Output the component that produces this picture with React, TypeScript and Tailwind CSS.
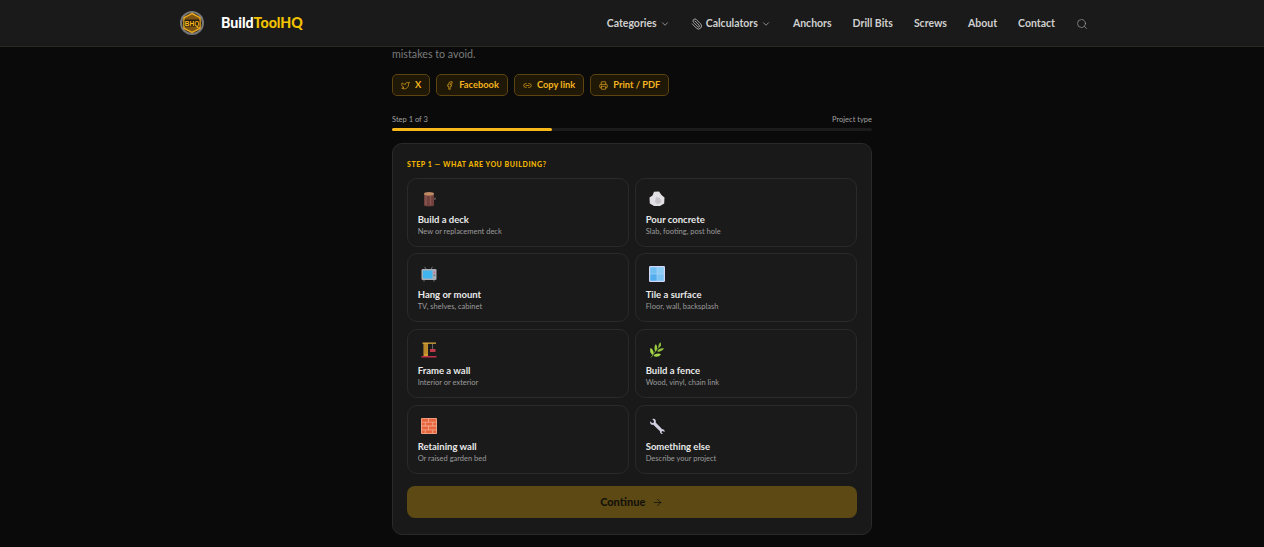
import React from "react";
import { ChevronDown, Paperclip, Search, Twitter, Facebook, Link2, Printer, ArrowRight } from "lucide-react";

const Logo = () => (
  <svg width="26" height="26" viewBox="0 0 26 26">
    <circle cx="13" cy="13" r="12" fill="#77777a" />
    <circle cx="13" cy="13" r="10" fill="#2e2410" />
    <path d="M13 3.500l8 4.200v10.600l-8 4.200-8-4.200V7.700z" fill="#7a5410" stroke="#e8a820" strokeWidth="1.500" />
    <rect x="5.500" y="9.500" width="15" height="7" fill="#2a1d08" />
    <text x="13" y="15.600" textAnchor="middle" fontSize="6.500" fontWeight="800" fill="#f5b820" fontFamily="'Liberation Sans', sans-serif">BHQ</text>
  </svg>
);

const Wood = () => (
  <svg width="16" height="16" viewBox="0 0 16 16">
    <path d="M3 3h10v11.500c-2 1.200-8 1.200-10 0z" fill="#70403c" />
    <path d="M5 5v9M9.500 5v9" stroke="#8a5650" strokeWidth="1.400" />
    <ellipse cx="8" cy="2.800" rx="5" ry="1.900" fill="#c08a64" />
    <path d="M13 7l2-.5v2l-2 .6z" fill="#5b5048" />
  </svg>
);
const Rock = () => (
  <svg width="16" height="16" viewBox="0 0 16 16">
    <path d="M5 .8l5-.3 2.500 3.500 3 2.500-.3 6-4.200 2.500H5L.8 12.500.5 6.500 3.500 4.500z" fill="#e2e0e4" />
    <path d="M7 6l4 1 1.500 4-4 2.500L6 11z" fill="#c6c3c9" />
  </svg>
);
const Tv = () => (
  <svg width="16" height="16" viewBox="0 0 16 16">
    <path d="M5 3L3.500 .8M10 3l1.500-2.200" stroke="#8a8a92" strokeWidth=".8" />
    <rect x=".5" y="3" width="15" height="11" rx="1.200" fill="#a9adb6" />
    <rect x="2" y="4.500" width="9.500" height="8" fill="#3fb4ee" />
    <rect x="12.600" y="5.500" width="1.600" height="1.600" fill="#d864a0" />
    <rect x="12.600" y="8.500" width="1.600" height="1.600" fill="#70747c" />
    <path d="M3 14v1.500M13 14v1.500" stroke="#777" strokeWidth="1" />
  </svg>
);
const Tile = () => (
  <svg width="16" height="16" viewBox="0 0 16 16">
    <rect width="16" height="16" rx="1.200" fill="#cfd8f8" />
    <rect x="1.200" y="1.200" width="6.600" height="6.600" fill="#6fbff2" />
    <rect x="8.200" y="1.200" width="6.600" height="6.600" fill="#8ccdf6" />
    <rect x="1.200" y="8.200" width="6.600" height="6.600" fill="#54aeee" />
    <rect x="8.200" y="8.200" width="6.600" height="6.600" fill="#7cc4f4" />
  </svg>
);
const Frame = () => (
  <svg width="16" height="16" viewBox="0 0 16 16">
    <rect x="2.500" y="1" width="4.500" height="13" fill="#d09a30" />
    <path d="M3 3h3.500M3 5h3.500M3 7h3.500M3 9h3.500M3 11h3.500" stroke="#8a6420" strokeWidth=".7" />
    <rect x="1.500" y=".5" width="13.500" height="1.300" fill="#d9a63a" />
    <rect x=".5" y="14" width="15" height="1.500" fill="#c2304a" />
    <rect x="9" y="7" width="5.500" height="3" fill="#c23a4a" />
    <path d="M11.500 2v5" stroke="#888" strokeWidth=".7" />
  </svg>
);
const Herb = () => (
  <svg width="16" height="16" viewBox="0 0 16 16">
    <path d="M2 15.500C5 11 8 7 12 3" stroke="#6f9a30" strokeWidth=".9" fill="none" />
    <path d="M4 13C.800 11.500 .800 8 1.500 6c2.800 1.300 3.800 4.500 2.500 7z" fill="#a6d648" />
    <path d="M6.500 9.500C4.800 7.500 5.500 3.500 6.800 2.300 8.800 4.300 8.300 8 6.500 9.500z" fill="#9ccc40" />
    <path d="M9.500 6C8.800 3.500 10 1.500 11.500 .2c1.200 2.300.5 4.600-2 5.800z" fill="#8cbc38" />
    <path d="M4.500 14c2.500 1.300 6 .8 7.500-1.800-2.500-1.200-6-.6-7.500 1.800z" fill="#a6d648" />
    <path d="M8 9.500c2.500.5 5.500-.5 7-3-3-.6-5.500.5-7 3z" fill="#94c43c" />
  </svg>
);
const Brick = () => (
  <svg width="16" height="16" viewBox="0 0 16 16">
    <rect width="16" height="16" rx="1" fill="#f4ad90" />
    <path d="M.8 .8h6.400v3H.8zM8 .8h7.200v3H8zM.8 4.600h3v3h-3zM4.600 4.600h6.800v3H4.600zM12.200 4.600h3v3h-3zM.8 8.400h6.400v3H.8zM8 8.400h7.200v3H8zM.8 12.200h3v3h-3zM4.600 12.200h6.800v3H4.600zM12.200 12.200h3v3h-3z" fill="#e8653e" />
  </svg>
);
const Wrench = () => (
  <svg width="16" height="16" viewBox="0 0 16 16">
    <path d="M1.200 3.300L3 5l1.700-.3L5 3 3.300 1.200C5 .3 6.500 1.200 6.800 3c.1.600 0 1.100-.1 1.400l6.500 6.800c1.500-.3 2.800 1.100 2.300 2.800L13.700 13l-1 .4-.2 1.100 1.500 1.300c-1.700.6-3.300-.7-3-2.500L4.300 6.800C2.500 7.200.500 5.500 1.200 3.300z" fill="#d2cfe2" />
  </svg>
);

const cards = [
  { Icon: Wood, t: "Build a deck", d: "New or replacement deck" },
  { Icon: Rock, t: "Pour concrete", d: "Slab, footing, post hole" },
  { Icon: Tv, t: "Hang or mount", d: "TV, shelves, cabinet" },
  { Icon: Tile, t: "Tile a surface", d: "Floor, wall, backsplash" },
  { Icon: Frame, t: "Frame a wall", d: "Interior or exterior" },
  { Icon: Herb, t: "Build a fence", d: "Wood, vinyl, chain link" },
  { Icon: Brick, t: "Retaining wall", d: "Or raised garden bed" },
  { Icon: Wrench, t: "Something else", d: "Describe your project" },
];

const shares = [
  { Icon: Twitter, t: "X" },
  { Icon: Facebook, t: "Facebook" },
  { Icon: Link2, t: "Copy link" },
  { Icon: Printer, t: "Print / PDF" },
];

export default function App() {
  return (
    <div className="h-[547px] overflow-hidden bg-[#0a0a0a] font-['Lato',sans-serif]">
      <header className="h-[47px] bg-[#1a1a1a] border-b border-[#2a2a1c] flex justify-center">
        <div className="w-[912px] flex items-center justify-between pl-[3px] pr-0">
          <div className="flex items-center gap-[16px]">
            <Logo />
            <span className="text-[14.200px] font-black text-white">
              Build<span className="text-[#f2c200]">ToolHQ</span>
            </span>
          </div>
          <nav className="flex items-center pt-[1px] text-[10.500px] font-bold text-[#cfcfcf]">
            <span className="flex items-center gap-[3px] mr-[21px]">
              Categories <ChevronDown size={10} strokeWidth={1.500} />
            </span>
            <span className="flex items-center gap-[3px] mr-[22px]">
              <Paperclip size={12} strokeWidth={1.500} className="-scale-x-100" /> Calculators <ChevronDown size={10} strokeWidth={1.500} />
            </span>
            <span className="mr-[21px]">Anchors</span>
            <span className="mr-[21px]">Drill Bits</span>
            <span className="mr-[21px]">Screws</span>
            <span className="mr-[21px]">About</span>
            <span className="mr-[21px]">Contact</span>
            <Search size={12} strokeWidth={1.300} className="text-[#a8a8a8]" />
          </nav>
        </div>
      </header>

      <main className="w-[480px] mx-auto">
        <p className="text-[10.700px] leading-[14px] text-[#7b7b7b]">mistakes to avoid.</p>
        <div className="flex gap-[6px] mt-[13px]">
          {shares.map(({ Icon, t }) => (
            <span
              key={t}
              className="h-[22px] px-[8px] flex items-center gap-[5px] rounded-[5px] border border-[#5c430f] bg-[#1f1806] text-[9.300px] font-bold text-[#f5b320]"
            >
              <Icon size={9} strokeWidth={1.700} />
              {t}
            </span>
          ))}
        </div>

        <div className="flex justify-between mt-[19px] text-[7.500px] leading-[10px] text-[#a0a0a0]">
          <span>Step 1 of 3</span>
          <span>Project type</span>
        </div>
        <div className="h-[3px] mt-[3px] rounded-full bg-[#1c1c1c]">
          <div className="h-full w-1/3 rounded-full bg-[#f9b81a]" />
        </div>

        <section className="mt-[12px] h-[392px] rounded-[10px] border border-[#2a2a2a] bg-[#191919] pl-[14px] pr-[14.500px] pt-[15px]">
          <h2 className="text-[7px] leading-[10px] font-black uppercase tracking-[0.56px] text-[#f0b400]">
            Step 1 — What are you building?
          </h2>
          <div className="grid grid-cols-2 gap-x-[6.500px] gap-y-[6.600px] mt-[8.800px]">
            {cards.map(({ Icon, t, d }) => (
              <div key={t} className="h-[69px] rounded-[10px] border border-[#2a2a2a] bg-[#1a1a1a] pl-[9.700px] pt-[12px]">
                <div className="pl-[3px] h-[16px]">
                  <Icon />
                </div>
                <div className="mt-[6px] text-[9.500px] leading-[13px] font-bold text-[#e8e8e8]">{t}</div>
                <div className="mt-[1px] text-[7.500px] leading-[10px] text-[#9a9a9a]">{d}</div>
              </div>
            ))}
          </div>
          <div className="mt-[12px] h-[32px] pt-[1px] rounded-[8px] bg-[#5c4914] flex items-center justify-center gap-[7px] text-[11px] font-black text-[#15120a]">
            Continue <ArrowRight size={11} strokeWidth={1.800} />
          </div>
        </section>
      </main>
    </div>
  );
}
